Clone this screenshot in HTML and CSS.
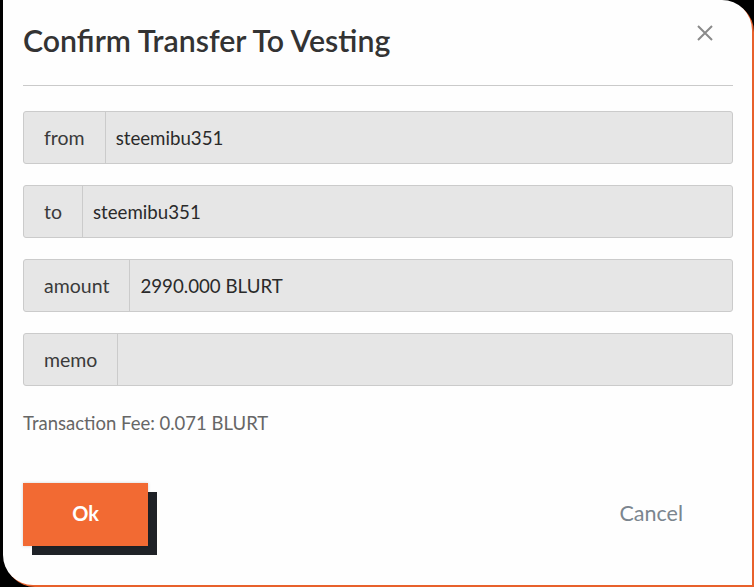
FILE: index.html
```html
<!DOCTYPE html>
<html lang="en">
<head>
<meta charset="utf-8">
<title>Confirm Transfer To Vesting</title>
<link rel="stylesheet" href="styles.css">
</head>
<body>
<div class="modal">
  <div class="modal-header">
    <h2 class="modal-title">Confirm Transfer To Vesting</h2>
    <button class="close-btn" aria-label="Close">
      <svg width="16" height="16" viewBox="0 0 16 16"><path d="M1 1L15 15M15 1L1 15" stroke="#8a8a8a" stroke-width="2" fill="none"/></svg>
    </button>
  </div>
  <div class="fields">
    <div class="field"><span class="field-label">from</span><span class="field-value">steemibu351</span></div>
    <div class="field"><span class="field-label">to</span><span class="field-value">steemibu351</span></div>
    <div class="field"><span class="field-label">amount</span><span class="field-value">2990.000 BLURT</span></div>
    <div class="field"><span class="field-label">memo</span><span class="field-value"></span></div>
  </div>
  <div class="fee">Transaction Fee: 0.071 BLURT</div>
  <div class="actions">
    <button class="btn-ok">Ok</button>
    <button class="btn-cancel">Cancel</button>
  </div>
</div>
</body>
</html>
```
FILE: styles.css
```css
html, body {
  margin: 0;
  padding: 0;
  background: #000;
  height: 100%;
  overflow: hidden;
}
body {
  font-family: "Lato", "Liberation Sans", sans-serif;
  color: #333;
}
.modal {
  margin-left: 3px;
  width: 749px;
  height: 585px;
  box-sizing: border-box;
  background: #fefefe;
  border-radius: 0 30px 0 30px;
  box-shadow: 2px 2px 0 #e8612c;
  padding: 0 19px 0 20px;
}
.modal-header {
  display: flex;
  justify-content: space-between;
  align-items: flex-start;
  padding-top: 23px;
  height: 62px;
  box-sizing: border-box;
  border-bottom: 1px solid #cacaca;
  height: 86px;
}
.modal-title {
  margin: 0;
  font-size: 30.3px;
  line-height: 34px;
  font-weight: 600;
  color: #333;
}
.close-btn {
  background: none;
  border: 0;
  padding: 0;
  margin: 2px 20px 0 0;
  width: 16px;
  height: 16px;
  display: flex;
}
.fields {
  display: flex;
  flex-direction: column;
  gap: 21px;
  margin-top: 25px;
}
.field {
  display: flex;
  height: 53px;
  box-sizing: border-box;
  border: 1px solid #cbcbcb;
  border-radius: 3px;
  background: #e6e6e6;
  color: #333;
}
.field-label {
  display: flex;
  align-items: center;
  padding: 0 20px;
  font-size: 19.5px;
  color: #3a3a3a;
  border-right: 1px solid #cbcbcb;
}
.field-value {
  display: flex;
  align-items: center;
  padding: 0 10px;
  font-size: 18.7px;
  color: #2a2a2a;
  flex: 1;
}
.fee {
  margin-top: 25px;
  font-size: 18.5px;
  line-height: 24px;
  color: #666;
}
.actions {
  display: flex;
  justify-content: space-between;
  align-items: center;
  margin-top: 48px;
}
.btn-ok {
  width: 125px;
  height: 63px;
  border: 0;
  padding: 0 0 3px;
  background: #f26a33;
  color: #fff;
  font-family: inherit;
  font-size: 20px;
  font-weight: 700;
  box-shadow: 0 0 3px rgba(0,0,0,0.18), 9px 9px 0 #1f2227;
}
.btn-cancel {
  background: none;
  border: 0;
  font-family: inherit;
  font-size: 21.5px;
  color: #7b858e;
  padding: 0 50px 3px 0;
}
```
